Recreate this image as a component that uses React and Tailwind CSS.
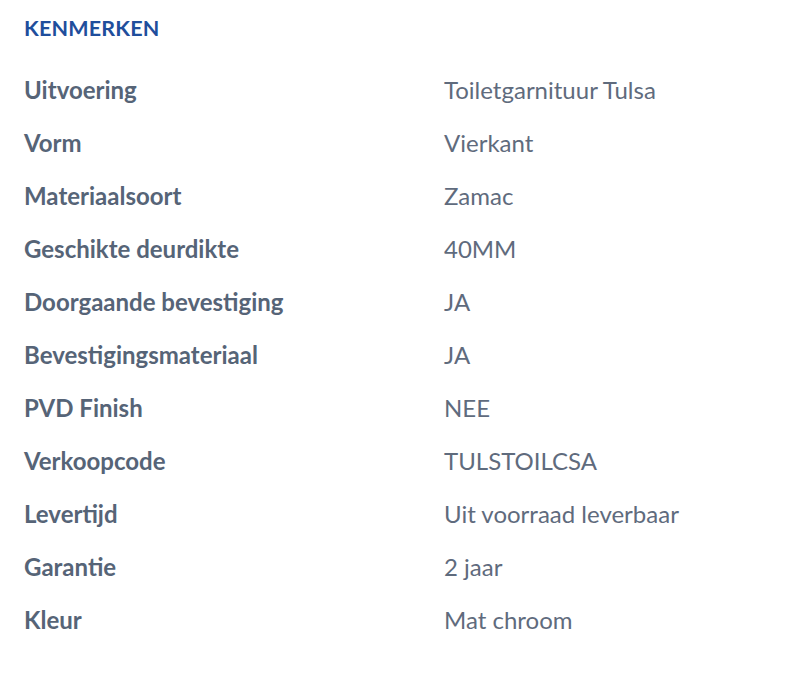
import React from 'react';

const specs = [
  { label: 'Uitvoering', value: 'Toiletgarnituur Tulsa' },
  { label: 'Vorm', value: 'Vierkant' },
  { label: 'Materiaalsoort', value: 'Zamac' },
  { label: 'Geschikte deurdikte', value: '40MM' },
  { label: 'Doorgaande bevestiging', value: 'JA' },
  { label: 'Bevestigingsmateriaal', value: 'JA' },
  { label: 'PVD Finish', value: 'NEE' },
  { label: 'Verkoopcode', value: 'TULSTOILCSA' },
  { label: 'Levertijd', value: 'Uit voorraad leverbaar' },
  { label: 'Garantie', value: '2 jaar' },
  { label: 'Kleur', value: 'Mat chroom' },
];

const App = () => {
  return (
    <section className="min-h-[676px] w-[800px] bg-white px-6 pt-[12px] font-['Lato','Liberation_Sans',sans-serif]">
      {/* Header */}
      <h2 className="text-[21.5px] font-bold uppercase leading-[32px] tracking-[0.2px] text-[#1f4e9c]">
        Kenmerken
      </h2>

      {/* Specs */}
      <dl className="mt-[19px] flex flex-col">
        {specs.map((spec) => (
          <div key={spec.label} className="grid h-[53px] grid-cols-[420px_1fr] items-center">
            <dt className="text-[24px] font-bold text-[#566477]">{spec.label}</dt>
            <dd className="text-[24px] text-[#5f6b7d]">{spec.value}</dd>
          </div>
        ))}
      </dl>
    </section>
  );
};

export default App;
